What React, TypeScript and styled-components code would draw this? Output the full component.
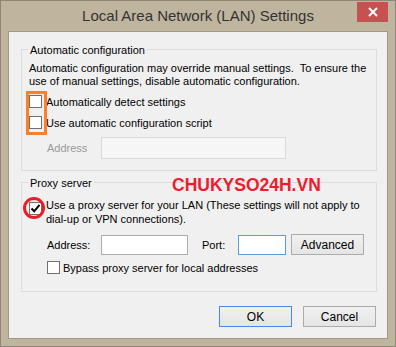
import React from "react";
import styled, { createGlobalStyle } from "styled-components";

const GlobalStyle = createGlobalStyle`
  html, body { margin: 0; padding: 0; background: #ffffff; }
  body { font-family: "Liberation Sans", Arial, sans-serif; }
  * { box-sizing: border-box; }
`;

const Window = styled.div`
  width: 396px;
  height: 347px;
  background: #bfb59e;
  border: 1px solid #8f8775;
  display: flex;
  flex-direction: column;
  padding: 0 7px 7px 7px;
`;

const TitleBar = styled.div`
  height: 30px;
  display: grid;
  grid-template-columns: 1fr auto 1fr;
  align-items: start;
`;

const Title = styled.div`
  grid-column: 2;
  font-size: 15px;
  line-height: 30px;
  color: #333333;
  white-space: nowrap;
`;

const CloseButton = styled.div`
  grid-column: 3;
  justify-self: end;
  width: 31px;
  height: 20px;
  margin-top: 1px;
  background: #c75050;
  display: flex;
  align-items: center;
  justify-content: center;
`;

const Client = styled.div`
  position: relative;
  flex: 1;
  background: #f0f0f0;
  border: 1px solid #a19985;
  display: flex;
  flex-direction: column;
  font-size: 11px;
  color: #000;
`;

const Group = styled.div<{ $top: number; $height: number }>`
  position: relative;
  margin: ${(p) => p.$top}px 0 0 12px;
  width: 356px;
  height: ${(p) => p.$height}px;
  border: 1px solid #dcdcdc;
  padding: 0 0 0 7px;
  display: flex;
  flex-direction: column;
`;

const Legend = styled.span`
  position: absolute;
  top: -7px;
  left: 6px;
  padding: 0 2px;
  background: #f0f0f0;
  line-height: 14px;
  white-space: nowrap;
`;

const Description = styled.div`
  margin-top: 12px;
  line-height: 13px;
  white-space: nowrap;
`;

const CheckRow = styled.div<{ $top: number; $indent?: number; $gap?: number }>`
  display: flex;
  align-items: center;
  margin-top: ${(p) => p.$top}px;
  margin-left: ${(p) => p.$indent ?? 0}px;
  gap: ${(p) => p.$gap ?? 4}px;
  height: 13px;
  white-space: nowrap;
`;

const MultiCheckRow = styled.div<{ $top: number }>`
  display: flex;
  align-items: flex-start;
  margin-top: ${(p) => p.$top}px;
  gap: 4px;
`;

const Box = styled.span<{ $offset?: number }>`
  flex: none;
  width: 13px;
  height: 13px;
  margin-top: ${(p) => p.$offset ?? 0}px;
  border: 1px solid #707070;
  background: #ffffff;
  display: flex;
  align-items: center;
  justify-content: center;
`;

const MultiLabel = styled.span`
  line-height: 14px;
  white-space: nowrap;
`;

const FieldRow = styled.div<{ $top: number }>`
  display: flex;
  align-items: center;
  margin-top: ${(p) => p.$top}px;
`;

const FieldLabel = styled.span<{ $width: number; $indent?: number; $disabled?: boolean }>`
  flex: none;
  width: ${(p) => p.$width}px;
  margin-left: ${(p) => p.$indent ?? 0}px;
  color: ${(p) => (p.$disabled ? "#9a9a9a" : "#000")};
  white-space: nowrap;
`;

const TextBox = styled.div<{ $width: number; $height: number; $state?: "disabled" | "focus" }>`
  flex: none;
  width: ${(p) => p.$width}px;
  height: ${(p) => p.$height}px;
  background: ${(p) => (p.$state === "disabled" ? "#f6f6f6" : "#ffffff")};
  border: 1px solid
    ${(p) =>
      p.$state === "disabled" ? "#d9d9d9" : p.$state === "focus" ? "#569de5" : "#abadb3"};
`;

const Button = styled.div<{ $default?: boolean; $width?: number; $height?: number; $left?: number }>`
  flex: none;
  width: ${(p) => p.$width ?? 73}px;
  height: ${(p) => p.$height ?? 21}px;
  margin-left: ${(p) => p.$left ?? 0}px;
  border: 1px solid ${(p) => (p.$default ? "#3c8ee8" : "#acacac")};
  background: linear-gradient(#f0f0f0, #e5e5e5);
  display: flex;
  align-items: center;
  justify-content: center;
  font-size: 12px;
  color: #000;
`;

const ButtonRow = styled.div`
  display: flex;
  justify-content: flex-end;
  gap: 11px;
  margin-top: 14px;
  padding-right: 11px;
`;

const OrangeMark = styled.div`
  position: absolute;
  left: 17px;
  top: 59px;
  width: 21px;
  height: 44px;
  border: 3px solid #ff7f27;
`;

const RedCircle = styled.div`
  position: absolute;
  left: 14px;
  top: 165px;
  width: 22px;
  height: 22px;
  border: 3px solid #ed1c24;
  border-radius: 50%;
`;

const Watermark = styled.div`
  position: absolute;
  left: 163px;
  top: 143px;
  font-size: 17.5px;
  line-height: 20px;
  font-weight: bold;
  color: #ee1c2e;
  white-space: nowrap;
`;

const Check = () => (
  <svg width="11" height="11" viewBox="0 0 11 11">
    <path d="M1.5 5.5 L4.2 8.3 L9.5 1.8" stroke="#000" strokeWidth="2" fill="none" />
  </svg>
);

export default function App() {
  return (
    <>
      <GlobalStyle />
      <Window>
        <TitleBar>
          <Title>Local Area Network (LAN) Settings</Title>
          <CloseButton>
            <svg width="10" height="10" viewBox="0 0 10 10">
              <path d="M1 1 L9 9 M9 1 L1 9" stroke="#fff" strokeWidth="2" />
            </svg>
          </CloseButton>
        </TitleBar>
        <Client>
          <Group $top={17} $height={122}>
            <Legend>Automatic configuration</Legend>
            <Description>
              Automatic configuration may override manual settings.&nbsp; To ensure the
              <br />
              use of manual settings, disable automatic configuration.
            </Description>
            <CheckRow $top={7}>
              <Box />
              <span>Automatically detect settings</span>
            </CheckRow>
            <CheckRow $top={8}>
              <Box />
              <span>Use automatic configuration script</span>
            </CheckRow>
            <FieldRow $top={8}>
              <FieldLabel $width={54} $indent={18} $disabled>
                Address
              </FieldLabel>
              <TextBox $width={185} $height={22} $state="disabled" />
            </FieldRow>
          </Group>
          <Group $top={11} $height={110}>
            <Legend>Proxy server</Legend>
            <MultiCheckRow $top={15}>
              <Box $offset={4}>
                <Check />
              </Box>
              <MultiLabel>
                Use a proxy server for your LAN (These settings will not apply to
                <br />
                dial-up or VPN connections).
              </MultiLabel>
            </MultiCheckRow>
            <FieldRow $top={8}>
              <FieldLabel $width={54} $indent={18}>
                Address:
              </FieldLabel>
              <TextBox $width={87} $height={20} />
              <FieldLabel $width={36} $indent={14}>
                Port:
              </FieldLabel>
              <TextBox $width={48} $height={20} $state="focus" />
              <Button $width={73} $height={21} $left={5}>
                Advanced
              </Button>
            </FieldRow>
            <CheckRow $top={6} $indent={18} $gap={3}>
              <Box />
              <span>Bypass proxy server for local addresses</span>
            </CheckRow>
          </Group>
          <ButtonRow>
            <Button $default>OK</Button>
            <Button>Cancel</Button>
          </ButtonRow>
          <OrangeMark />
          <RedCircle />
          <Watermark>CHUKYSO24H.VN</Watermark>
        </Client>
      </Window>
    </>
  );
}
